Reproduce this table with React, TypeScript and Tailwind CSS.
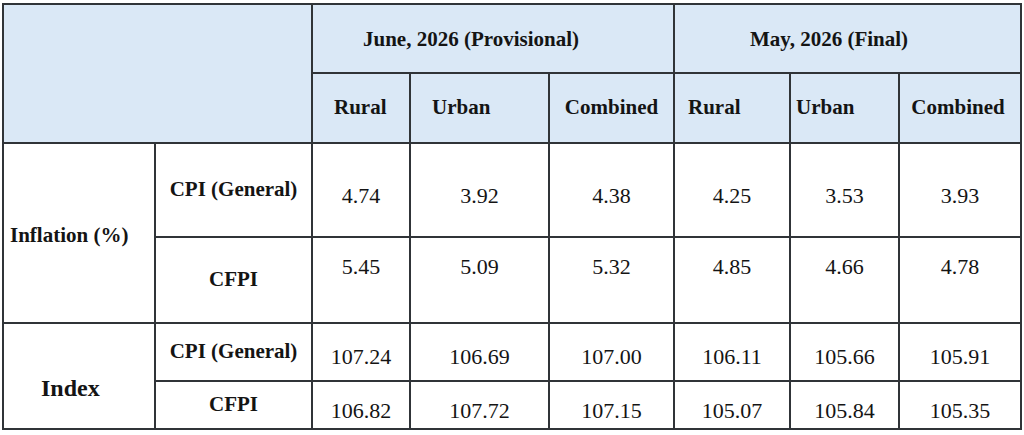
import React from "react";

const b = "border-2 border-[#303438]";

export default function App() {
  const june = [
    ["4.74", "3.92", "4.38"],
    ["5.45", "5.09", "5.32"],
    ["107.24", "106.69", "107.00"],
    ["106.82", "107.72", "107.15"],
  ];
  const may = [
    ["4.25", "3.53", "3.93"],
    ["4.85", "4.66", "4.78"],
    ["106.11", "105.66", "105.91"],
    ["105.07", "105.84", "105.35"],
  ];
  const rows = [0, 1, 2, 3].map((i) => [...june[i], ...may[i]]);
  const dataPad = ["pt-[10px] align-middle", "pt-[12px] align-top", "pt-[8px] align-middle", "pt-[10px] align-middle"];
  const heights = ["h-[94px]", "h-[86px]", "h-[58px]", "h-[48px]"];

  return (
    <div className="w-[1024px] h-[435px] bg-white pl-[2px] pt-[3px]" style={{ fontFamily: '"Liberation Serif", "Times New Roman", serif' }}>
      <table className="border-collapse table-fixed w-[1018px] text-[#141414]">
        <colgroup>
          <col className="w-[152px]" />
          <col className="w-[157px]" />
          <col className="w-[98px]" />
          <col className="w-[139px]" />
          <col className="w-[125px]" />
          <col className="w-[116px]" />
          <col className="w-[109px]" />
          <col className="w-[122px]" />
        </colgroup>
        <tbody>
          <tr className="h-[69px] bg-[#dae8f6]">
            <td colSpan={2} rowSpan={2} className={b}></td>
            <td colSpan={3} className={`${b} text-[21px] font-bold text-left pl-[50px] pt-[3px]`}>June, 2026 (Provisional)</td>
            <td colSpan={3} className={`${b} text-[21px] font-bold text-left pl-[75px] pt-[3px]`}>May, 2026 (Final)</td>
          </tr>
          <tr className="h-[70px] bg-[#dae8f6] text-[21px] font-bold">
            <td className={`${b} text-left pl-[21px]`}>Rural</td>
            <td className={`${b} text-left pl-[21px]`}>Urban</td>
            <td className={`${b} text-center`}>Combined</td>
            <td className={`${b} text-left pl-[13px]`}>Rural</td>
            <td className={`${b} text-left pl-[5px]`}>Urban</td>
            <td className={`${b} text-center pr-[4px]`}>Combined</td>
          </tr>
          {rows.map((r, i) => (
            <tr key={i} className={heights[i]}>
              {i === 0 && (
                <td rowSpan={2} className={`${b} text-[21px] font-bold text-left pl-[6px] pt-[6px]`}>Inflation (%)</td>
              )}
              {i === 2 && (
                <td rowSpan={2} className={`${b} text-[24px] font-bold text-left pl-[37px] pt-[24px]`}>Index</td>
              )}
              <td className={`${b} text-[21px] font-bold text-center`}>{i % 2 === 0 ? "CPI (General)" : "CFPI"}</td>
              {r.map((v, j) => (
                <td key={j} className={`${b} text-[22px] text-center ${dataPad[i]}`}>{v}</td>
              ))}
            </tr>
          ))}
        </tbody>
      </table>
    </div>
  );
}
